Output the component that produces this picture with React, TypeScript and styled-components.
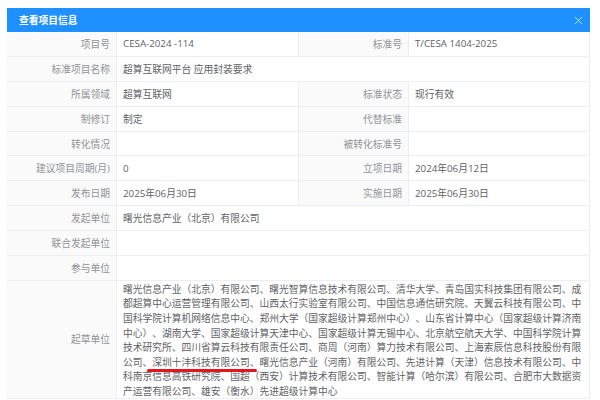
import { createGlobalStyle } from 'styled-components';
import styled from 'styled-components';
import { X } from 'lucide-react';

const GlobalStyle = createGlobalStyle`
  html, body {
    margin: 0;
    padding: 0;
    background: #fff;
    font-family: "Open Sans", "Noto Sans CJK SC", sans-serif;
    text-spacing-trim: space-all;
  }
`;

const Page = styled.div`
  width: 600px;
  height: 400px;
  overflow: hidden;
  padding: 8px 10px 0 7px;
  box-sizing: border-box;
`;

const Header = styled.div`
  height: 24px;
  background: #1e90ff;
  color: #fff;
  display: flex;
  align-items: center;
  justify-content: space-between;
  padding: 0 5px 0 12px;
  font-size: 9.75px;
  font-weight: 700;
`;

const Close = styled.span`
  display: flex;
  color: #e6f2ff;
`;

const Grid = styled.div`
  display: grid;
  grid-template-columns: 110px 182px 110px 181px;
  grid-template-rows: repeat(10, 24.9px) 118px;
  font-size: 9.75px;
`;

const Label = styled.div`
  background: #fafafa;
  color: #909399;
  display: flex;
  align-items: center;
  justify-content: flex-end;
  padding-right: 6px;
  box-sizing: border-box;
  border-right: 1px solid #ebeef5;
  border-bottom: 1px solid #ebeef5;
`;

const Value = styled.div<{ $wide?: boolean; $tall?: boolean }>`
  color: #606266;
  display: flex;
  align-items: center;
  padding: 0 6px 0 6px;
  box-sizing: border-box;
  border-bottom: 1px solid #ebeef5;
  border-right: 1px solid #ebeef5;
  ${(p) => p.$wide && 'grid-column: span 3;'}
  ${(p) => p.$tall && 'line-height: 14.55px; align-items: flex-start; padding-top: 2px;'}
`;

const Marked = styled.span`
  position: relative;

  &::after {
    content: '';
    position: absolute;
    left: -5px;
    right: 3px;
    bottom: -3px;
    height: 3px;
    border-radius: 2px;
    background: #e8141c;
  }
`;

const topRow: [string, string, string, string] = ['项目号', 'CESA-2024 -114', '标准号', 'T/CESA 1404-2025'];
const rowsAfterName: [string, string, string, string][] = [
  ['所属领域', '超算互联网', '标准状态', '现行有效'],
  ['制修订', '制定', '代替标准', ''],
  ['转化情况', '', '被转化标准号', ''],
  ['建议项目周期(月)', '0', '立项日期', '2024年06月12日'],
  ['发布日期', '2025年06月30日', '实施日期', '2025年06月30日'],
];

function Row({ cells }: { cells: [string, string, string, string] }) {
  return (
    <>
      <Label>{cells[0]}</Label>
      <Value>{cells[1]}</Value>
      <Label>{cells[2]}</Label>
      <Value>{cells[3]}</Value>
    </>
  );
}

export default function App() {
  return (
    <>
      <GlobalStyle />
      <Page>
        <Header>
          查看项目信息
          <Close>
            <X size={13} strokeWidth={1.5} />
          </Close>
        </Header>
        <Grid>
          <Row cells={topRow} />
          <Label>标准项目名称</Label>
          <Value $wide>超算互联网平台 应用封装要求</Value>
          {rowsAfterName.map((r) => (
            <Row key={r[0]} cells={r} />
          ))}
          <Label>发起单位</Label>
          <Value $wide>曙光信息产业（北京）有限公司</Value>
          <Label>联合发起单位</Label>
          <Value $wide />
          <Label>参与单位</Label>
          <Value $wide />
          <Label>起草单位</Label>
          <Value $wide $tall>
            <div>
              曙光信息产业（北京）有限公司、曙光智算信息技术有限公司、清华大学、青岛国实科技集团有限公司、成都超算中心运营管理有限公司、山西太行实验室有限公司、中国信息通信研究院、天翼云科技有限公司、中国科学院计算机网络信息中心、郑州大学（国家超级计算郑州中心）、山东省计算中心（国家超级计算济南中心）、湖南大学、国家超级计算天津中心、国家超级计算无锡中心、北京航空航天大学、中国科学院计算技术研究所、四川省算云科技有限责任公司、商周（河南）算力技术有限公司、上海索辰信息科技股份有限公司、
              <Marked>深圳十沣科技有限公司、</Marked>
              曙光信息产业（河南）有限公司、先进计算（天津）信息技术有限公司、中科南京信息高铁研究院、国超（西安）计算技术有限公司、智能计算（哈尔滨）有限公司、合肥市大数据资产运营有限公司、雄安（衡水）先进超级计算中心
            </div>
          </Value>
        </Grid>
      </Page>
    </>
  );
}
